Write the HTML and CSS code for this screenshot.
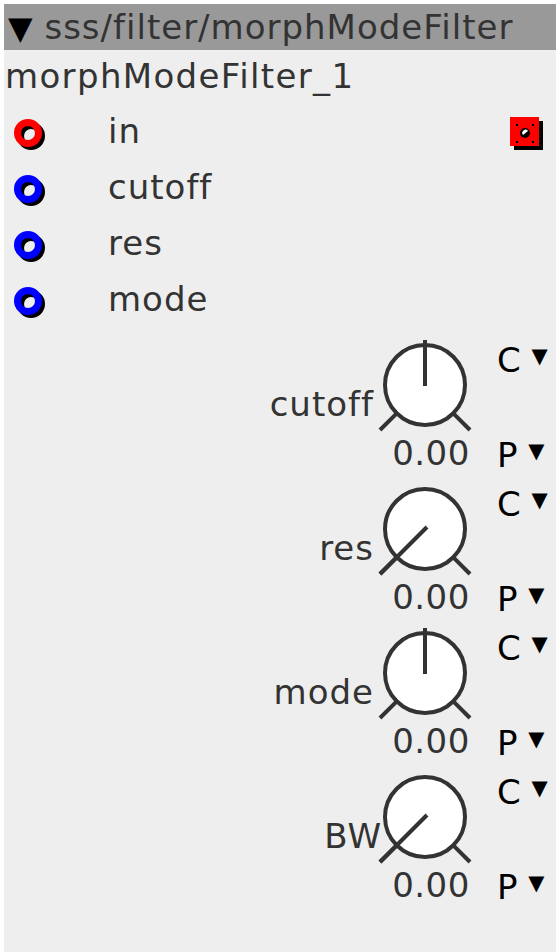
FILE: index.html
```html
<!DOCTYPE html>
<html lang="en">
<head>
    <meta charset="UTF-8">
    <meta name="viewport" content="width=device-width, initial-scale=1.0">
    <title>morphModeFilter</title>
    <link rel="stylesheet" href="styles.css">
</head>
<body>
    <div class="panel">
        <div class="titlebar"><span class="collapse">▼</span> sss/filter/morphModeFilter</div>
        <div class="instname">morphModeFilter_1</div>

        <div class="port">
            <svg class="inlet" width="40" height="40" viewBox="0 0 40 40">
                <circle cx="23" cy="23" r="10.5" fill="none" stroke="#000" stroke-width="7"/>
                <circle cx="20" cy="20" r="10.5" fill="none" stroke="#f00" stroke-width="7"/>
            </svg>
            <span class="portlabel">in</span>
            <svg class="outlet" width="40" height="40" viewBox="0 0 40 40">
                <rect x="8" y="8" width="29" height="29" fill="#000"/>
                <rect x="4" y="4" width="29" height="29" fill="#f00"/>
                <circle cx="19" cy="20" r="5" fill="#000"/>
                <path d="M17 22 A3 3 0 0 1 22 18 Z" fill="#fff"/>
                <rect x="10" y="11" width="2" height="2" fill="#000"/>
                <rect x="26" y="11" width="2" height="2" fill="#000"/>
                <rect x="10" y="28" width="2" height="2" fill="#000"/>
                <rect x="26" y="28" width="2" height="2" fill="#000"/>
            </svg>
        </div>
        <div class="port">
            <svg class="inlet" width="40" height="40" viewBox="0 0 40 40">
                <circle cx="23" cy="23" r="10.5" fill="none" stroke="#000" stroke-width="7"/>
                <circle cx="20" cy="20" r="10.5" fill="none" stroke="#00f" stroke-width="7"/>
            </svg>
            <span class="portlabel">cutoff</span>
        </div>
        <div class="port">
            <svg class="inlet" width="40" height="40" viewBox="0 0 40 40">
                <circle cx="23" cy="23" r="10.5" fill="none" stroke="#000" stroke-width="7"/>
                <circle cx="20" cy="20" r="10.5" fill="none" stroke="#00f" stroke-width="7"/>
            </svg>
            <span class="portlabel">res</span>
        </div>
        <div class="port">
            <svg class="inlet" width="40" height="40" viewBox="0 0 40 40">
                <circle cx="23" cy="23" r="10.5" fill="none" stroke="#000" stroke-width="7"/>
                <circle cx="20" cy="20" r="10.5" fill="none" stroke="#00f" stroke-width="7"/>
            </svg>
            <span class="portlabel">mode</span>
        </div>

        <div class="params">
            <div class="knobrow">
                <div class="knoblabel">cutoff</div>
                <div class="knobcol">
                    <svg width="100" height="100" viewBox="0 0 100 100">
                        <circle cx="50" cy="50" r="40" fill="#fff" stroke="#333" stroke-width="4"/>
                        <line x1="21.7" y1="78.3" x2="5" y2="95" stroke="#333" stroke-width="4"/>
                        <line x1="78.3" y1="78.3" x2="95" y2="95" stroke="#333" stroke-width="4"/>
                        <line x1="50" y1="5" x2="50" y2="51" stroke="#333" stroke-width="4"/>
                    </svg>
                    <div class="knobvalue">0.00</div>
                </div>
                <div class="ctlcol">
                    <div class="ctl">C <span class="arrow">▼</span></div>
                    <div class="ctl">P <span class="arrow">▼</span></div>
                </div>
            </div>
            <div class="knobrow">
                <div class="knoblabel">res</div>
                <div class="knobcol">
                    <svg width="100" height="100" viewBox="0 0 100 100">
                        <circle cx="50" cy="50" r="40" fill="#fff" stroke="#333" stroke-width="4"/>
                        <line x1="21.7" y1="78.3" x2="5" y2="95" stroke="#333" stroke-width="4"/>
                        <line x1="78.3" y1="78.3" x2="95" y2="95" stroke="#333" stroke-width="4"/>
                        <line x1="52" y1="48" x2="5" y2="95" stroke="#333" stroke-width="4"/>
                    </svg>
                    <div class="knobvalue">0.00</div>
                </div>
                <div class="ctlcol">
                    <div class="ctl">C <span class="arrow">▼</span></div>
                    <div class="ctl">P <span class="arrow">▼</span></div>
                </div>
            </div>
            <div class="knobrow">
                <div class="knoblabel">mode</div>
                <div class="knobcol">
                    <svg width="100" height="100" viewBox="0 0 100 100">
                        <circle cx="50" cy="50" r="40" fill="#fff" stroke="#333" stroke-width="4"/>
                        <line x1="21.7" y1="78.3" x2="5" y2="95" stroke="#333" stroke-width="4"/>
                        <line x1="78.3" y1="78.3" x2="95" y2="95" stroke="#333" stroke-width="4"/>
                        <line x1="50" y1="5" x2="50" y2="51" stroke="#333" stroke-width="4"/>
                    </svg>
                    <div class="knobvalue">0.00</div>
                </div>
                <div class="ctlcol">
                    <div class="ctl">C <span class="arrow">▼</span></div>
                    <div class="ctl">P <span class="arrow">▼</span></div>
                </div>
            </div>
            <div class="knobrow">
                <div class="knoblabel wide">BW</div>
                <div class="knobcol">
                    <svg width="100" height="100" viewBox="0 0 100 100">
                        <circle cx="50" cy="50" r="40" fill="#fff" stroke="#333" stroke-width="4"/>
                        <line x1="21.7" y1="78.3" x2="5" y2="95" stroke="#333" stroke-width="4"/>
                        <line x1="78.3" y1="78.3" x2="95" y2="95" stroke="#333" stroke-width="4"/>
                        <line x1="52" y1="48" x2="5" y2="95" stroke="#333" stroke-width="4"/>
                    </svg>
                    <div class="knobvalue">0.00</div>
                </div>
                <div class="ctlcol">
                    <div class="ctl">C <span class="arrow">▼</span></div>
                    <div class="ctl">P <span class="arrow">▼</span></div>
                </div>
            </div>
        </div>
    </div>
</body>
</html>
```

FILE: styles.css
```css
body {
    margin: 0;
    background-color: #fff;
    font-family: "DejaVu Sans", Verdana, sans-serif;
    color: #333;
}
.panel {
    margin: 4px 4px 0 4px;
    width: 552px;
    min-height: 948px;
    background-color: #eee;
}
.titlebar {
    height: 46px;
    box-sizing: border-box;
    padding: 3px 0 0 4px;
    background-color: #999;
    font-size: 34px;
    line-height: 40px;
    letter-spacing: 1px;
    white-space: nowrap;
    overflow: hidden;
}
.collapse {
    color: #000;
    font-size: 32px;
    letter-spacing: 0;
}
.instname {
    height: 55px;
    box-sizing: border-box;
    padding: 6px 0 0 1px;
    font-size: 34px;
    line-height: 40px;
    letter-spacing: 1.35px;
}
.port {
    display: flex;
    align-items: center;
    height: 56px;
}
.inlet {
    margin-left: 4px;
}
.portlabel {
    align-self: flex-start;
    margin-top: 6px;
    margin-left: 60px;
    font-size: 34px;
    line-height: 40px;
    letter-spacing: 1px;
}
.outlet {
    margin-left: auto;
    margin-right: 10px;
}
.params {
    padding-top: 6px;
}
.knobrow {
    display: flex;
    justify-content: flex-end;
    height: 144px;
    font-size: 34px;
    line-height: 40px;
}
.knoblabel {
    padding-top: 49px;
    padding-right: 1px;
    letter-spacing: 1px;
}
.knoblabel.wide {
    margin-right: -8px;
}
.knobcol {
    display: flex;
    flex-direction: column;
    align-items: center;
    width: 100px;
}
.knobcol svg {
    display: block;
}
.knobvalue {
    margin-top: -2px;
    margin-left: 12px;
    letter-spacing: 0.5px;
}
.ctlcol {
    display: flex;
    flex-direction: column;
    justify-content: space-between;
    width: 58px;
    margin-left: 22px;
    margin-right: 1px;
    padding: 1px 0 4px 0;
    color: #000;
}
.ctl {
    white-space: nowrap;
}
.arrow {
    font-size: 21px;
    vertical-align: 9px;
}
```
